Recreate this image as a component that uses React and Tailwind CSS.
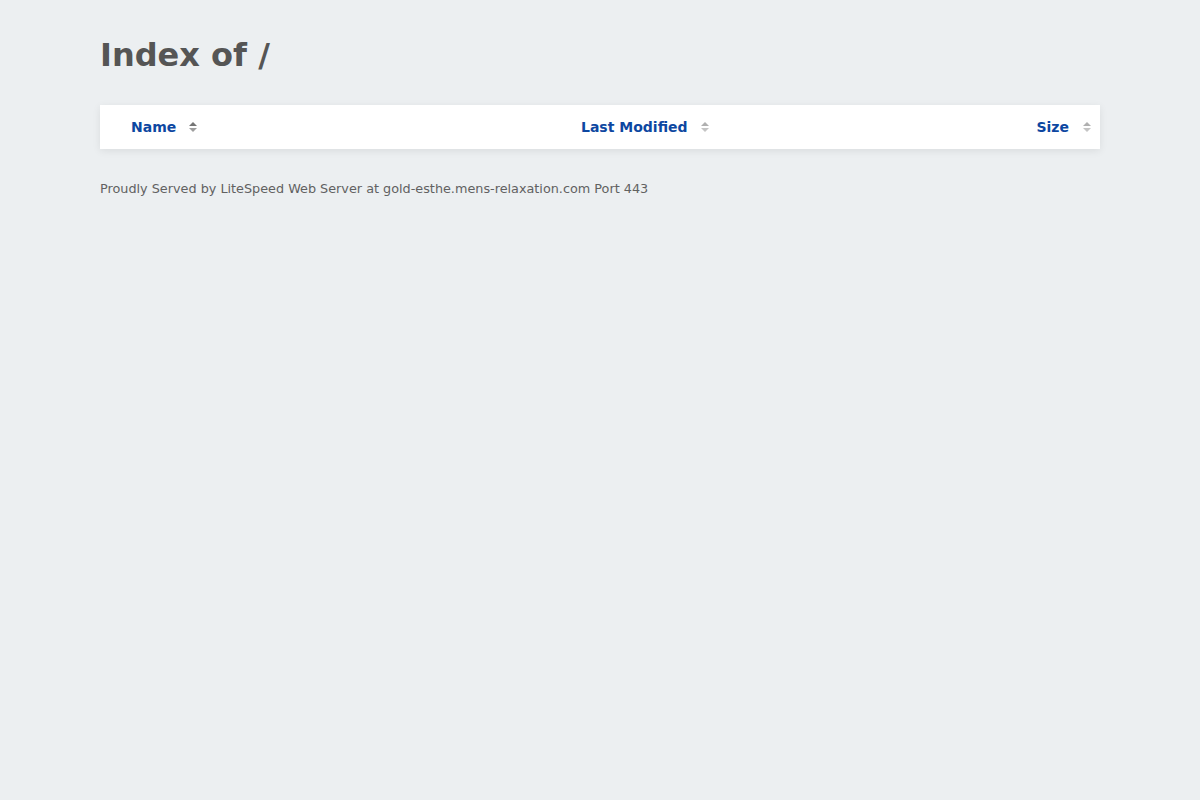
import React from 'react';

function SortIcon({ active }) {
    return (
        <svg width="8" height="10" viewBox="0 0 8 10" className="inline-block">
            <path d="M0 4 L4 0 L8 4 Z" fill={active ? '#757575' : '#b0b0b0'} />
            <path d="M0 6 L4 10 L8 6 Z" fill={active ? '#9e9e9e' : '#c4c4c4'} />
        </svg>
    );
}

export default function App() {
    return (
        <div className="min-h-screen bg-[#eceff1] text-[#555] font-['DejaVu_Sans',sans-serif]">
            <div className="w-[1000px] mx-auto pt-[35px]">
                <h1 className="text-[32px] leading-[40px] font-bold text-[#555]">Index of /</h1>

                {/* listing */}
                <div className="mt-[30px] bg-white shadow-[0_2px_8px_rgba(0,0,0,0.08)] h-[44px] flex items-center text-[14px] font-bold text-[#0d47a1]">
                    <div className="w-[450px] pl-[31px] flex items-center gap-[13px]">
                        <span>Name</span>
                        <SortIcon active />
                    </div>
                    <div className="flex-1 pl-[31px] flex items-center gap-[13px]">
                        <span>Last Modified</span>
                        <SortIcon />
                    </div>
                    <div className="pr-[9px] flex items-center gap-[14px]">
                        <span>Size</span>
                        <SortIcon />
                    </div>
                </div>

                <p className="mt-[32px] text-[12.8px] leading-[16px] text-[#616161]">
                    Proudly Served by LiteSpeed Web Server at gold-esthe.mens-relaxation.com Port 443
                </p>
            </div>
        </div>
    );
}
